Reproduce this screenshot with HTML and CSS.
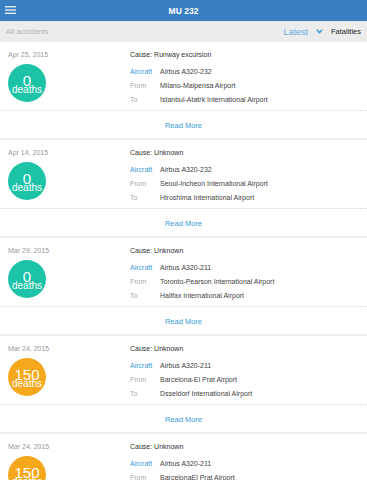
FILE: index.html
```html
<!DOCTYPE html>
<html lang="en">
<head>
    <meta charset="UTF-8">
    <meta name="viewport" content="width=device-width, initial-scale=1.0">
    <title>MU 232</title>
    <link rel="stylesheet" href="styles.css">
</head>
<body>

    <div class="topbar">
        <span class="menu-icon">
            <svg width="11" height="8" viewBox="0 0 11 8">
                <rect x="0" y="0" width="11" height="1.4" fill="#fff" opacity="0.85"/>
                <rect x="0" y="3.3" width="11" height="1.4" fill="#fff" opacity="0.85"/>
                <rect x="0" y="6.6" width="11" height="1.4" fill="#fff" opacity="0.85"/>
            </svg>
        </span>
        <span class="title">MU 232</span>
    </div>

    <div class="filterbar">
        <span class="all">All accidents</span>
        <span class="sort">
            <span class="latest">Latest</span>
            <svg class="chevron" width="7" height="5" viewBox="0 0 7 5">
                <path d="M0.8 0.8 L3.5 3.6 L6.2 0.8" fill="none" stroke="#4a9fd8" stroke-width="1.5"/>
            </svg>
            <span class="fatalities">Fatalities</span>
        </span>
    </div>

    <div class="list">
        <div class="card">
            <div class="card-top">
                <div class="left">
                    <div class="date">Apr 25, 2015</div>
                    <div class="badge teal"><span class="num">0</span><span class="unit">deaths</span></div>
                </div>
                <div class="right">
                    <div class="cause">Cause: Runway excursion</div>
                    <div class="row"><span class="label blue">Aircraft</span><span class="value">Airbus A320-232</span></div>
                    <div class="row"><span class="label">From</span><span class="value">Milano-Malpensa Airport</span></div>
                    <div class="row"><span class="label">To</span><span class="value">Istanbul-Atatrk International Airport</span></div>
                </div>
            </div>
            <div class="read-more">Read More</div>
        </div>

        <div class="card">
            <div class="card-top">
                <div class="left">
                    <div class="date">Apr 14, 2015</div>
                    <div class="badge teal"><span class="num">0</span><span class="unit">deaths</span></div>
                </div>
                <div class="right">
                    <div class="cause">Cause: Unknown</div>
                    <div class="row"><span class="label blue">Aircraft</span><span class="value">Airbus A320-232</span></div>
                    <div class="row"><span class="label">From</span><span class="value">Seoul-Incheon International Airport</span></div>
                    <div class="row"><span class="label">To</span><span class="value">Hiroshima International Airport</span></div>
                </div>
            </div>
            <div class="read-more">Read More</div>
        </div>

        <div class="card">
            <div class="card-top">
                <div class="left">
                    <div class="date">Mar 29, 2015</div>
                    <div class="badge teal"><span class="num">0</span><span class="unit">deaths</span></div>
                </div>
                <div class="right">
                    <div class="cause">Cause: Unknown</div>
                    <div class="row"><span class="label blue">Aircraft</span><span class="value">Airbus A320-211</span></div>
                    <div class="row"><span class="label">From</span><span class="value">Toronto-Pearson International Airport</span></div>
                    <div class="row"><span class="label">To</span><span class="value">Halifax International Airport</span></div>
                </div>
            </div>
            <div class="read-more">Read More</div>
        </div>

        <div class="card">
            <div class="card-top">
                <div class="left">
                    <div class="date">Mar 24, 2015</div>
                    <div class="badge orange"><span class="num">150</span><span class="unit">deaths</span></div>
                </div>
                <div class="right">
                    <div class="cause">Cause: Unknown</div>
                    <div class="row"><span class="label blue">Aircraft</span><span class="value">Airbus A320-211</span></div>
                    <div class="row"><span class="label">From</span><span class="value">Barcelona-El Prat Airport</span></div>
                    <div class="row"><span class="label">To</span><span class="value">Dsseldorf International Airport</span></div>
                </div>
            </div>
            <div class="read-more">Read More</div>
        </div>

        <div class="card">
            <div class="card-top">
                <div class="left">
                    <div class="date">Mar 24, 2015</div>
                    <div class="badge orange"><span class="num">150</span><span class="unit">deaths</span></div>
                </div>
                <div class="right">
                    <div class="cause">Cause: Unknown</div>
                    <div class="row"><span class="label blue">Aircraft</span><span class="value">Airbus A320-211</span></div>
                    <div class="row"><span class="label">From</span><span class="value">BarcelonaEl Prat Airport</span></div>
                    <div class="row"><span class="label">To</span><span class="value">Dsseldorf International Airport</span></div>
                </div>
            </div>
            <div class="read-more">Read More</div>
        </div>
    </div>

</body>
</html>
```

FILE: styles.css
```css
body {
    margin: 0;
    background-color: #fff;
    font-family: "Liberation Sans", Arial, sans-serif;
    overflow: hidden;
}

.topbar {
    height: 21px;
    background-color: #3a7fc2;
    display: flex;
    align-items: center;
    justify-content: center;
    position: relative;
}

.menu-icon {
    position: absolute;
    left: 5px;
    top: 6px;
    line-height: 0;
}

.title {
    color: #fff;
    font-weight: bold;
    font-size: 8.5px;
}

.filterbar {
    height: 21px;
    background-color: #ececec;
    display: flex;
    align-items: center;
    justify-content: space-between;
    padding: 0 6px;
}

.all {
    color: #b3b3b3;
    font-size: 7.6px;
}

.sort {
    display: flex;
    align-items: center;
}

.latest {
    color: #5aaee0;
    font-size: 9px;
}

.chevron {
    margin-left: 8px;
    margin-right: 8px;
}

.fatalities {
    color: #222;
    font-size: 7.5px;
}

.card {
    border-bottom: 2px solid #f2f2f2;
}

.card-top {
    display: flex;
    height: 69px;
    padding: 6px 0 0 8px;
    box-sizing: border-box;
    border-bottom: 1px dotted #d8d8d8;
}

.left {
    width: 122px;
}

.date {
    color: #9a9a9a;
    font-size: 7px;
    line-height: 14px;
}

.badge {
    width: 38px;
    height: 38px;
    box-sizing: border-box;
    padding-top: 3px;
    border-radius: 50%;
    margin-top: 2px;
    display: flex;
    flex-direction: column;
    align-items: center;
    justify-content: center;
    color: #fff;
}

.teal {
    background-color: #1cc3a7;
}

.orange {
    background-color: #f5a81c;
}

.num {
    font-size: 15px;
    line-height: 10px;
}

.unit {
    font-size: 10px;
    line-height: 8px;
}

.cause {
    color: #333;
    font-size: 7px;
    line-height: 14px;
    margin-bottom: 3px;
}

.row {
    display: flex;
    font-size: 7px;
    line-height: 14px;
}

.label {
    width: 30px;
    color: #aaa;
}

.label.blue {
    color: #3b9ad9;
}

.value {
    color: #444;
}

.read-more {
    height: 25px;
    padding-top: 2px;
    line-height: 25px;
    text-align: center;
    color: #3b9ad9;
    font-size: 7.5px;
}
```
